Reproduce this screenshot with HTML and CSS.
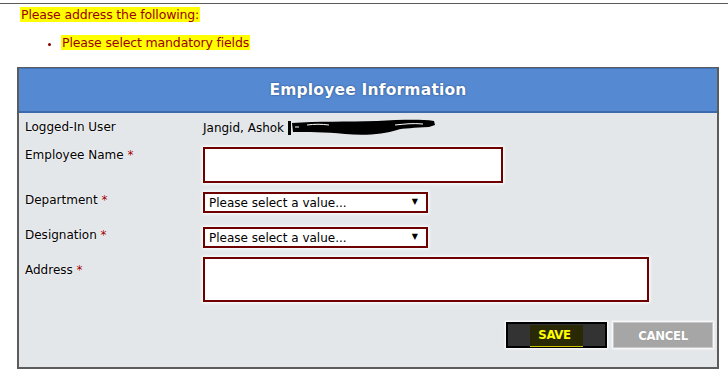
FILE: index.html
```html
<!DOCTYPE html>
<html>
<head>
<meta charset="utf-8">
<link rel="stylesheet" href="styles.css">
</head>
<body>
<div class="page">
  <div class="messages">
    <p class="msg-title"><span class="hl">Please address the following:</span></p>
    <ul class="msg-list">
      <li><span class="hl">Please select mandatory fields</span></li>
    </ul>
  </div>
  <div class="panel">
    <div class="panel-head">Employee Information</div>
    <div class="panel-body">
      <div class="row row-user">
        <div class="label">Logged-In User</div>
        <div class="value user">Jangid, Ashok <span class="redact"><svg width="150" height="18" viewBox="0 0 150 18"><path d="M1 2 L4 2 L4 16 L1 16 Z" fill="#000"/><path d="M5 4 C30 2 60 3 90 2 C112 1 132 0 147 2 L148 6 L142 8 C128 9 116 9 110 11 C98 15 78 17 58 15 C38 13 20 13 6 13 Z" fill="#000"/><path d="M20 6 C28 5 34 5 42 6" stroke="#fff" stroke-width="1" fill="none"/><path d="M108 6 C118 5 126 4 136 5" stroke="#fff" stroke-width="1" fill="none"/><path d="M8 8 L12 8" stroke="#fff" stroke-width="1"/></svg></span></div>
      </div>
      <div class="row row-name">
        <div class="label">Employee Name <span class="req">*</span></div>
        <div class="value"><input class="input input-name" type="text"></div>
      </div>
      <div class="row row-dept">
        <div class="label">Department <span class="req">*</span></div>
        <div class="value"><span class="select-wrap"><select class="select"><option>Please select a value...</option></select></span></div>
      </div>
      <div class="row row-desig">
        <div class="label">Designation <span class="req">*</span></div>
        <div class="value"><span class="select-wrap"><select class="select"><option>Please select a value...</option></select></span></div>
      </div>
      <div class="row row-addr">
        <div class="label">Address <span class="req">*</span></div>
        <div class="value"><textarea class="input input-addr"></textarea></div>
      </div>
      <div class="actions">
        <button class="btn btn-save"><span class="save-mark">SAVE</span></button>
        <button class="btn btn-cancel">CANCEL</button>
      </div>
    </div>
  </div>
</div>
</body>
</html>
```

FILE: styles.css
```css
html, body {
  margin: 0;
  padding: 0;
  background: #fff;
}
body {
  font-family: "DejaVu Sans", Verdana, sans-serif;
  font-size: 12px;
  color: #000;
}
.page {
  padding-top: 3px;
}
.messages {
  border-top: 1px solid #5a5a5a;
  padding-left: 20px;
}
.msg-title {
  margin: 2px 0 0 0;
  line-height: 18px;
}
.hl {
  background: #ffff00;
  color: #9a0000;
  padding: 0 1px;
  font-size: 12.5px;
  letter-spacing: -0.15px;
}
.msg-list {
  margin: 10px 0 0 0;
  padding-left: 41px;
  line-height: 17px;
  color: #8a0000;
}
.msg-list li::marker {
  font-size: 11px;
}
.panel {
  margin: 15px 0 0 17px;
  width: 702px;
  box-sizing: border-box;
  border: 1px solid #5c5c5c;
  border-width: 1px 2px 2px 2px;
  background: #e4e7ea;
}
.panel-head {
  height: 42px;
  background: #558ad2;
  border-top: 1px solid #3f72b8;
  border-bottom: 2px solid #3c6aab;
  color: #fff;
  font-weight: bold;
  font-size: 15.5px;
  text-align: center;
  line-height: 42px;
  text-shadow: 0 0 2px #1f3f73;
  letter-spacing: 0.2px;
}
.panel-body {
  padding: 0 0 19px 6px;
}
.row {
  display: grid;
  grid-template-columns: 178px 1fr;
  align-items: start;
}
.label {
  line-height: 14px;
  padding-top: 1px;
  text-shadow: 0 0 2px #fff;
}
.req {
  color: #a00000;
}
.value {
  line-height: 14px;
}
.row-user {
  margin-top: 6px;
  height: 22px;
}
.user {
  display: flex;
  align-items: center;
}
.redact {
  display: inline-block;
  margin-left: 3px;
  height: 18px;
}
.redact svg {
  display: block;
}
.row-name { margin-top: 6px; }
.row-dept { margin-top: 9px; }
.row-desig { margin-top: 14px; }
.row-addr { margin-top: 9px; }
.row-addr .label { padding-top: 6px; }
.input {
  display: block;
  box-sizing: border-box;
  border: 2px solid #6e0000;
  background: #fff;
  box-shadow: 0 0 3px 1px #fff;
  margin: 0;
  padding: 2px 4px;
  font-family: inherit;
  resize: none;
  outline: none;
}
.input-name {
  width: 300px;
  height: 36px;
}
.input-addr {
  width: 446px;
  height: 45px;
}
.select-wrap {
  position: relative;
  display: block;
  width: 225px;
}
.select-wrap::after {
  content: "\25BC";
  position: absolute;
  right: 10px;
  top: 5px;
  font-size: 8px;
  line-height: 10px;
  color: #000;
  pointer-events: none;
}
.select {
  -webkit-appearance: none;
  appearance: none;
  display: block;
  width: 225px;
  height: 21px;
  box-sizing: border-box;
  border: 2px solid #6e0000;
  border-radius: 0;
  background: #fff;
  box-shadow: 0 0 3px 1px #fff;
  font-family: "DejaVu Sans", Verdana, sans-serif;
  font-size: 12px;
  padding: 0 0 0 4px;
  margin: 0;
  color: #000;
  outline: none;
}
.actions {
  display: flex;
  justify-content: flex-end;
  gap: 6px;
  margin-top: 20px;
  padding-right: 4px;
}
.btn {
  height: 26px;
  box-sizing: border-box;
  font-family: "DejaVu Sans Condensed", "DejaVu Sans", sans-serif;
  font-weight: bold;
  font-size: 13px;
  padding: 0;
  margin: 0;
  border-radius: 0;
  box-shadow: 0 0 2px 1px #fff;
  letter-spacing: -0.3px;
}
.btn-save {
  width: 101px;
  background: #333;
  border: 2px solid #000;
  color: #ffff00;
  display: flex;
  align-items: center;
  justify-content: center;
}
.save-mark {
  display: inline-block;
  background: #2a2905;
  padding: 3px 12px 4px 8px;
  border-bottom: 1px solid #c9c400;
  line-height: 14px;
  margin-top: 2px;
}
.btn-cancel {
  width: 100px;
  background: #a6a6a6;
  border: 1px solid #c8c8c8;
  color: #fff;
  text-shadow: 0 0 1px #888;
}
```
